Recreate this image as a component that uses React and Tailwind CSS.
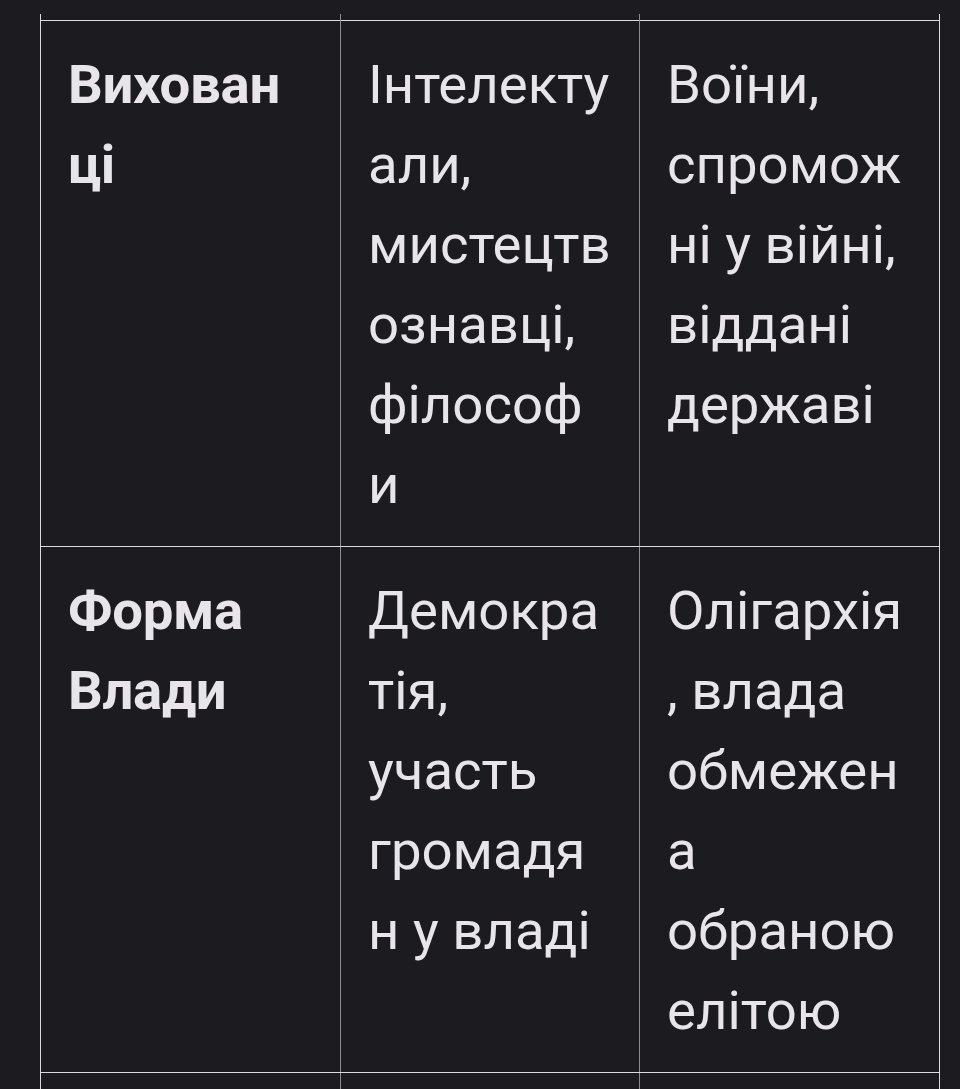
import React from "react";

const rows = [
  {
    head: ["Вихован", "ці"],
    a: ["Інтелекту", "али,", "мистецтв", "ознавці,", "філософ", "и"],
    b: ["Воїни,", "спромож", "ні у війні,", "віддані", "державі"],
  },
  {
    head: ["Форма", "Влади"],
    a: ["Демокра", "тія,", "участь", "громадя", "н у владі"],
    b: ["Олігархія", ", влада", "обмежен", "а", "обраною", "елітою"],
  },
];

function Lines({ lines }) {
  return (
    <>
      {lines.map((l, i) => (
        <div key={i} className="whitespace-nowrap">
          {l}
        </div>
      ))}
    </>
  );
}

export default function App() {
  const cellBase =
    "align-top pl-[27px] pr-[20px] pt-[23px] pb-[22px] border-t border-b border-t-[#dcdcdc] border-b-[#dcdcdc]";
  return (
    <div
      className="w-[960px] h-[1089px] overflow-hidden bg-[#1c1b20] text-[#e7e5ea]"
      style={{ fontFamily: "Roboto, 'Noto Sans', sans-serif" }}
    >
      <table className="ml-[40px] mt-[14px] w-[899px] table-fixed border-collapse text-[54.5px] leading-[80px]">
        <colgroup>
          <col className="w-[300px]" />
          <col className="w-[299px]" />
          <col className="w-[300px]" />
        </colgroup>
        <tbody>
          <tr className="h-[6px]">
            <td className="p-0 border-l border-l-[#dcdcdc]"></td>
            <td className="p-0 border-l border-l-[#8e8e8e]"></td>
            <td className="p-0 border-l border-r border-l-[#8e8e8e] border-r-[#dcdcdc]"></td>
          </tr>
          {rows.map((r, i) => (
            <tr key={i}>
              <td className={`${cellBase} font-bold tracking-[-0.3px] border-l border-l-[#dcdcdc]`}>
                <Lines lines={r.head} />
              </td>
              <td className={`${cellBase} border-l border-l-[#8e8e8e]`}>
                <Lines lines={r.a} />
              </td>
              <td className={`${cellBase} border-l border-r border-l-[#8e8e8e] border-r-[#dcdcdc]`}>
                <Lines lines={r.b} />
              </td>
            </tr>
          ))}
          <tr className="h-[120px]">
            <td className="border-t border-t-[#dcdcdc] border-l border-l-[#dcdcdc]"></td>
            <td className="border-t border-t-[#dcdcdc] border-l border-l-[#8e8e8e]"></td>
            <td className="border-t border-t-[#dcdcdc] border-l border-r border-l-[#8e8e8e] border-r-[#dcdcdc]"></td>
          </tr>
        </tbody>
      </table>
    </div>
  );
}
